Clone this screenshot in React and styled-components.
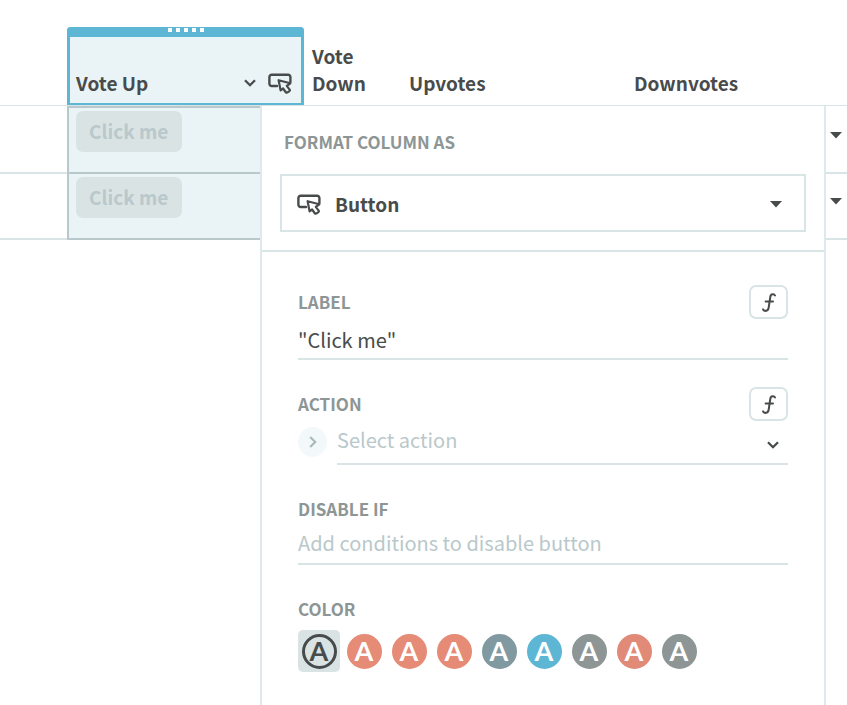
import React, { useState } from "react";
import styled, { createGlobalStyle } from "styled-components";

const color = {
  ink: "#484b4b",
  muted: "#8d9695",
  faint: "#b9c8cb",
  line: "#d9e4e7",
  chip: "#dae3e4",
  tint: "#eaf3f6",
  blue: "#5eb6d5",
  coral: "#e58b76",
};

const GlobalStyle = createGlobalStyle`
  * { box-sizing: border-box; }
  body {
    margin: 0;
    background: #fff;
    color: ${color.ink};
    font-family: "Noto Sans CJK SC", "Noto Sans", sans-serif;
  }
  button, input, select { font: inherit; color: inherit; }
`;

const Page = styled.main`
  position: relative;
  min-height: 100vh;
  padding-top: 27px;
  overflow: hidden;
`;

const Table = styled.table`
  width: 100%;
  table-layout: fixed;
  border-collapse: separate;
  border-spacing: 0;
`;

const Column = styled.col`
  width: ${(p) => p.$width || "auto"};
`;

const HeadCell = styled.th`
  height: 79px;
  padding: 0 8px 9px;
  border-bottom: 1px solid ${color.line};
  vertical-align: bottom;
  text-align: left;
  font-size: 19px;
  line-height: 27px;
  font-weight: 700;
`;

const SelectedHeadCell = styled(HeadCell)`
  padding: 0;
`;

const SelectedHead = styled.div`
  display: flex;
  flex-direction: column;
  justify-content: space-between;
  height: 78px;
  border: solid ${color.blue};
  border-width: 0 3px 2px;
  border-radius: 4px 4px 0 0;
  background: ${color.tint};
`;

const DragHandle = styled.div`
  display: flex;
  justify-content: center;
  gap: 4px;
  height: 10px;
  margin: 0 -3px;
  padding-top: 1px;
  border-radius: 4px 4px 0 0;
  background: ${color.blue};
`;

const Grip = styled.span`
  width: 4px;
  height: 4px;
  background: #fff;
`;

const HeadTitle = styled.div`
  display: flex;
  align-items: center;
  gap: 12px;
  padding: 0 9px 7px 6px;
`;

const HeadName = styled.span`
  flex: 1;
`;

const IconButton = styled.button`
  display: flex;
  padding: 0;
  border: 0;
  background: none;
  cursor: pointer;
`;

const Cell = styled.td`
  height: 66px;
  padding: 0;
  border-bottom: 2px solid ${color.line};
  vertical-align: top;
`;

const SelectedCell = styled(Cell)`
  height: ${(p) => (p.$first ? "68px" : "66px")};
  padding: 3px 7px;
  border: solid ${color.faint};
  border-width: ${(p) => (p.$first ? "2px 0 2px 2px" : "0 0 2px 2px")};
  background: ${color.tint};
`;

const CellButton = styled.button`
  height: 41px;
  padding: 0 14px 2px 13px;
  border: 0;
  border-radius: 7px;
  background: ${color.chip};
  color: ${color.faint} !important;
  font-size: 19px;
  line-height: 38px;
  font-weight: 700;
`;

const MenuCell = styled(Cell)`
  padding: ${(p) => (p.$first ? "26px 5px 0" : "24px 5px 0")};
`;

const MenuButton = styled(IconButton)`
  margin-left: auto;
`;

const Popover = styled.section`
  position: absolute;
  top: 106px;
  left: 260px;
  right: 21px;
  min-height: calc(100vh - 106px);
  border: solid #dfe9eb;
  border-width: 0 2px;
  background: #fff;
`;

const FormatSection = styled.div`
  display: flex;
  flex-direction: column;
  gap: 20px;
  padding: 24px 18px 18px;
  border-bottom: 2px solid ${color.line};
`;

const Caption = styled.label`
  font-size: 17px;
  line-height: 24px;
  font-weight: 700;
  color: ${color.muted};
`;

const FormatCaption = styled(Caption)`
  padding-left: 4px;
`;

const ControlRow = styled.div`
  display: flex;
  align-items: center;
  gap: 10px;
`;

const SelectBox = styled(ControlRow)`
  gap: 14px;
  height: 58px;
  padding: 2px 22px 0 15px;
  border: 2px solid ${color.line};
`;

const PlainSelect = styled.select`
  flex: 1;
  min-width: 0;
  padding: 0;
  border: 0;
  outline: 0;
  appearance: none;
  background: none;
  font-size: ${(p) => (p.$strong ? "19px" : "20px")};
  line-height: 28px;
  font-weight: ${(p) => (p.$strong ? 700 : 400)};
  color: ${(p) => (p.$strong ? color.ink : color.faint)};
`;

const Form = styled.form`
  display: flex;
  flex-direction: column;
  padding: 33px 36px;
`;

const Field = styled.div`
  display: flex;
  flex-direction: column;
  margin-bottom: ${(p) => (p.$tall ? "32px" : "27px")};
`;

const FieldHead = styled.div`
  display: flex;
  align-items: center;
  justify-content: space-between;
`;

const FormulaButton = styled.button`
  display: grid;
  place-items: center;
  width: 39px;
  height: 34px;
  padding: 0;
  border: 2px solid ${color.line};
  border-radius: 7px;
  background: #fff;
`;

const TextInput = styled.input`
  width: 100%;
  height: ${(p) => (p.$tall ? "44px" : "41px")};
  padding: 1px 0 0;
  border: 0;
  border-bottom: 2px solid ${color.line};
  outline: 0;
  background: none;
  font-size: 20px;
  &::placeholder {
    color: ${color.faint};
    opacity: 1;
  }
`;

const ActionRow = styled(ControlRow)`
  align-items: flex-start;
`;

const ExpandButton = styled.button`
  display: grid;
  place-items: center;
  width: 29px;
  height: 30px;
  margin-top: 6px;
  padding: 0;
  border: 0;
  border-radius: 50%;
  background: #f3f8fb;
`;

const UnderlinedSelect = styled(ControlRow)`
  flex: 1;
  align-items: flex-start;
  height: 44px;
  padding: 5px 9px 0 0;
  border-bottom: 2px solid ${color.line};
`;

const ChevronSlot = styled.span`
  display: flex;
  align-items: center;
  height: 38px;
`;

const Swatches = styled.fieldset`
  display: flex;
  flex-wrap: wrap;
  gap: 3px;
  margin: 0;
  padding: 0;
  border: 0;
`;

const Legend = styled(Caption).attrs({ as: "legend" })`
  padding: 0;
  margin-bottom: 9px;
`;

const Swatch = styled.label`
  display: grid;
  place-items: center;
  width: 42px;
  height: 42px;
  border-radius: 5px;
  cursor: pointer;
  &:has(input:checked) {
    background: ${color.chip};
  }
`;

const Radio = styled.input`
  grid-area: 1 / 1;
  width: 35px;
  height: 35px;
  margin: 0;
  opacity: 0;
`;

const Disc = styled.span`
  grid-area: 1 / 1;
  width: 35px;
  height: 35px;
  border: 3px solid ${(p) => p.$tone};
  border-radius: 50%;
  background: ${(p) => (p.$outline ? "transparent" : p.$tone)};
  color: ${(p) => (p.$outline ? p.$tone : "#fff")};
  font: 700 27px/27px Lato, sans-serif;
  text-align: center;
`;

const ButtonIcon = () => (
  <svg width="24" height="22" viewBox="0 0 24 22" fill="none" stroke={color.ink} strokeWidth="2.4" strokeLinejoin="round" strokeLinecap="round" aria-hidden="true">
    <path d="M9 14H3.700a2.300 2.300 0 0 1-2.300-2.300V5a2.300 2.300 0 0 1 2.300-2.300h16.400A2.300 2.300 0 0 1 22.400 5v5" />
    <path d="M10.600 8.200l2 10.200 2.500-1.900 2.900 4c.7.900 4.500-1.600 3.800-2.700l-3-3.900 3.500-2.600z" strokeWidth="2.200" />
  </svg>
);

const Chevron = () => (
  <svg width="12" height="8" viewBox="0 0 12 8" fill="none" stroke={color.ink} strokeWidth="2.3" aria-hidden="true">
    <path d="M1 1.2l5 5 5-5" />
  </svg>
);

const ChevronRight = () => (
  <svg width="8" height="12" viewBox="0 0 8 12" fill="none" stroke="#a9babd" strokeWidth="2.2" aria-hidden="true">
    <path d="M1.2 1l5 5-5 5" />
  </svg>
);

const Caret = () => (
  <svg width="12" height="7" viewBox="0 0 12 7" fill={color.ink} aria-hidden="true">
    <path d="M0 0h12L6 6.6z" />
  </svg>
);

const FormulaIcon = () => (
  <svg width="14" height="19" viewBox="0 0 14 19" fill="none" stroke={color.ink} strokeWidth="2" strokeLinecap="round" aria-hidden="true">
    <path d="M13 2.5C12.4 1 8.800 .4 8.300 4L6.700 14.500C6.200 18.400 2.500 18.700 1.100 16.400M3.600 8.500h7.400" />
  </svg>
);

const tones = [
  { name: "Outline", tone: color.ink, outline: true },
  { name: "Coral", tone: color.coral },
  { name: "Salmon", tone: color.coral },
  { name: "Orange", tone: color.coral },
  { name: "Slate", tone: "#8199a1" },
  { name: "Blue", tone: color.blue },
  { name: "Gray", tone: color.muted },
  { name: "Red", tone: "#e08a77" },
  { name: "Dark gray", tone: color.muted },
];

export default function App() {
  const [picked, setPicked] = useState("Outline");
  const [label, setLabel] = useState('"Click me"');

  return (
    <Page>
      <GlobalStyle />
      <Table>
        <colgroup>
          <Column $width="67px" />
          <Column $width="237px" />
          <Column $width="97px" />
          <Column $width="225px" />
          <Column />
        </colgroup>
        <thead>
          <tr>
            <HeadCell as="td" />
            <SelectedHeadCell scope="col">
              <SelectedHead>
                <DragHandle>
                  {[0, 1, 2, 3, 4].map((n) => <Grip key={n} />)}
                </DragHandle>
                <HeadTitle>
                  <HeadName>Vote Up</HeadName>
                  <IconButton type="button" aria-label="Column menu"><Chevron /></IconButton>
                  <ButtonIcon />
                </HeadTitle>
              </SelectedHead>
            </SelectedHeadCell>
            <HeadCell scope="col">Vote Down</HeadCell>
            <HeadCell scope="col">Upvotes</HeadCell>
            <HeadCell scope="col">Downvotes</HeadCell>
          </tr>
        </thead>
        <tbody>
          {[0, 1].map((row) => (
            <tr key={row}>
              <Cell />
              <SelectedCell $first={row === 0}>
                <CellButton type="button" disabled>Click me</CellButton>
              </SelectedCell>
              <Cell />
              <Cell />
              <MenuCell $first={row === 0}>
                <MenuButton type="button" aria-label="Open downvotes"><Caret /></MenuButton>
              </MenuCell>
            </tr>
          ))}
        </tbody>
      </Table>

      <Popover aria-label="Column format">
        <FormatSection>
          <FormatCaption htmlFor="format">FORMAT COLUMN AS</FormatCaption>
          <SelectBox>
            <ButtonIcon />
            <PlainSelect id="format" $strong defaultValue="Button">
              <option>Button</option>
            </PlainSelect>
            <Caret />
          </SelectBox>
        </FormatSection>

        <Form>
          <Field>
            <FieldHead>
              <Caption htmlFor="label">LABEL</Caption>
              <FormulaButton type="button" aria-label="Label formula"><FormulaIcon /></FormulaButton>
            </FieldHead>
            <TextInput id="label" value={label} onChange={(e) => setLabel(e.target.value)} />
          </Field>

          <Field $tall>
            <FieldHead>
              <Caption htmlFor="action">ACTION</Caption>
              <FormulaButton type="button" aria-label="Action formula"><FormulaIcon /></FormulaButton>
            </FieldHead>
            <ActionRow>
              <ExpandButton type="button" aria-label="Expand action"><ChevronRight /></ExpandButton>
              <UnderlinedSelect>
                <PlainSelect id="action" defaultValue="Select action">
                  <option>Select action</option>
                </PlainSelect>
                <ChevronSlot><Chevron /></ChevronSlot>
              </UnderlinedSelect>
            </ActionRow>
          </Field>

          <Field $tall>
            <Caption htmlFor="disable">DISABLE IF</Caption>
            <TextInput id="disable" $tall placeholder="Add conditions to disable button" />
          </Field>

          <Swatches>
            <Legend>COLOR</Legend>
            {tones.map((t) => (
              <Swatch key={t.name}>
                <Disc $tone={t.tone} $outline={t.outline}>A</Disc>
                <Radio
                  type="radio"
                  name="color"
                  aria-label={t.name}
                  checked={picked === t.name}
                  onChange={() => setPicked(t.name)}
                />
              </Swatch>
            ))}
          </Swatches>
        </Form>
      </Popover>
    </Page>
  );
}
